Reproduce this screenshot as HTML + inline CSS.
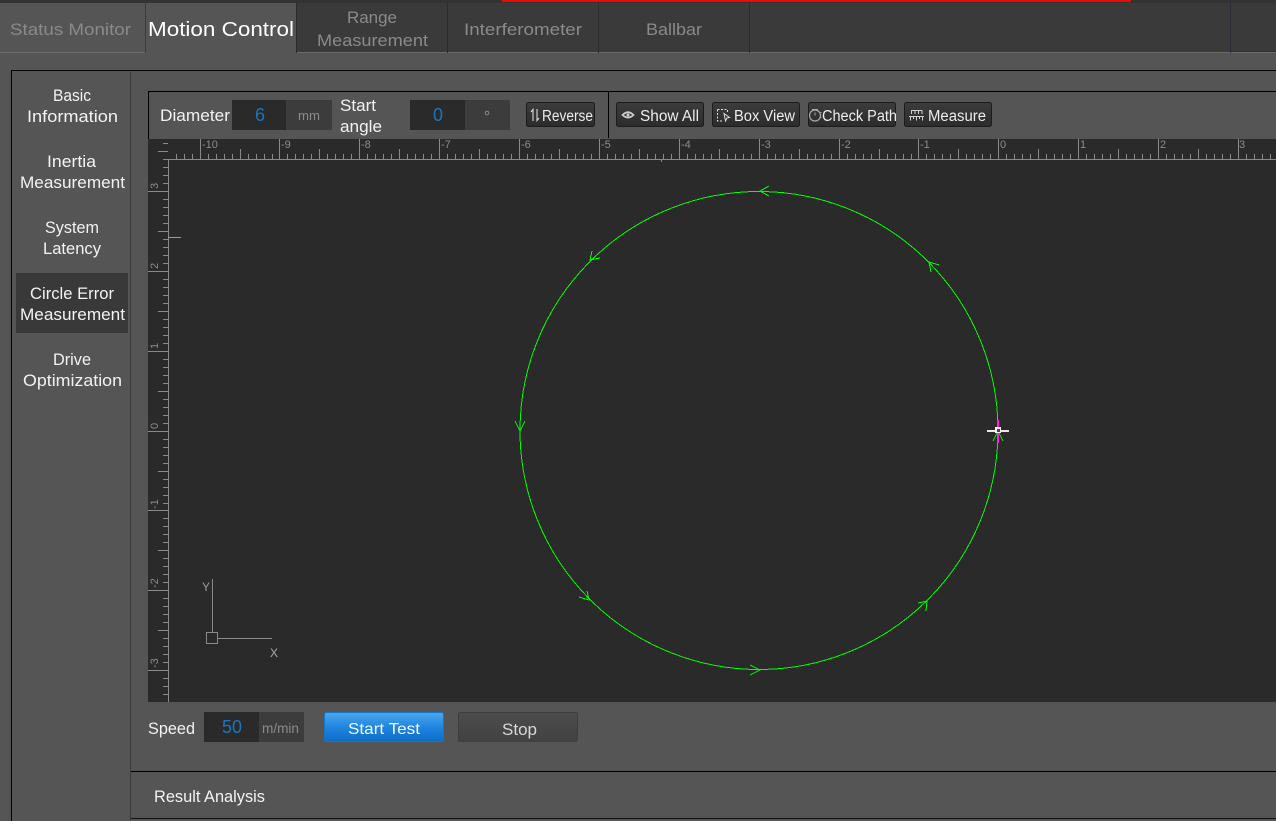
<!DOCTYPE html>
<html lang="en">
<head>
<meta charset="utf-8">
<title>Circle Error Measurement</title>
<style>
html,body{margin:0;padding:0;width:1276px;height:821px;overflow:hidden;background:#555}
svg{display:block}
text{font-family:"Liberation Sans",sans-serif;white-space:pre}
.side{font-size:17px;fill:#f2f2f2}
.tab{font-size:17px;fill:#8a8a8a}
.btn{font-size:15.500px;fill:#ececec}
.rx{font-size:11px;fill:#8c8c8c}
.val{font-size:18px;fill:#1c74bd}
.unit{font-size:13px;fill:#8a8a8a}
.lbl{font-size:17px;fill:#f2f2f2}
</style>
</head>
<body>
<svg width="1276" height="821" viewBox="0 0 1276 821" xmlns="http://www.w3.org/2000/svg">
<defs>
<linearGradient id="bg" x1="0" y1="0" x2="0" y2="1"><stop offset="0" stop-color="#3c3c3c"/><stop offset="1" stop-color="#2c2c2c"/></linearGradient>
<linearGradient id="blue" x1="0" y1="0" x2="0" y2="1"><stop offset="0" stop-color="#4ea6ec"/><stop offset=".5" stop-color="#1f86e0"/><stop offset="1" stop-color="#0d6cc8"/></linearGradient>
<linearGradient id="stop" x1="0" y1="0" x2="0" y2="1"><stop offset="0" stop-color="#4c4c4c"/><stop offset="1" stop-color="#424242"/></linearGradient>
<clipPath id="cv"><rect x="148" y="139" width="1128" height="563"/></clipPath>
<path id="hu" d="M0 0V-20M7.985 0v-5M15.970 0v-5M23.955 0v-5M31.940 0v-5M39.925 0v-10M47.910 0v-5M55.895 0v-5M63.880 0v-5M71.865 0v-5"/>
<path id="vu" d="M0 0H-20M0 7.985h-5M0 15.970h-5M0 23.955h-5M0 31.940h-5M0 39.925h-10M0 47.910h-5M0 55.895h-5M0 63.880h-5M0 71.865h-5"/>
</defs>

<!-- page -->
<rect width="1276" height="821" fill="#555"/>

<!-- top strip -->
<rect width="1276" height="3" fill="#333"/>
<rect x="502" y="0" width="629" height="2" fill="#f00808"/>

<!-- tabs -->
<rect x="0" y="3" width="1276" height="50" fill="#3a3a3a"/>
<rect x="0" y="3" width="146" height="50" fill="#555"/>
<rect x="146" y="3" width="151" height="51" fill="#555"/>
<rect x="0" y="52" width="146" height="1" fill="#6c6c6c"/>
<rect x="297" y="52" width="979" height="1" fill="#6c6c6c"/>
<rect x="145" y="3" width="1" height="50" fill="#3a3a3a"/>
<rect x="296" y="3" width="1" height="50" fill="#2c2c2c"/>
<rect x="447" y="3" width="1" height="50" fill="#2c2c2c"/>
<rect x="598" y="3" width="1" height="50" fill="#2c2c2c"/>
<rect x="749" y="3" width="1" height="50" fill="#2c2c2c"/>
<rect x="1230" y="3" width="1" height="50" fill="#2a2d3e"/>
<rect x="1231" y="51" width="45" height="1" fill="#2a2d3e"/>

<text class="tab" x="10" y="35" textLength="121" lengthAdjust="spacingAndGlyphs">Status Monitor</text>
<text x="148" y="36" font-size="20" fill="#fff" textLength="146" lengthAdjust="spacingAndGlyphs">Motion Control</text>
<text class="tab" x="347" y="23" textLength="50" lengthAdjust="spacingAndGlyphs">Range</text>
<text class="tab" x="317" y="46" textLength="111" lengthAdjust="spacingAndGlyphs">Measurement</text>
<text class="tab" x="464" y="35" textLength="118" lengthAdjust="spacingAndGlyphs">Interferometer</text>
<text class="tab" x="646" y="35" textLength="56" lengthAdjust="spacingAndGlyphs">Ballbar</text>

<!-- main panel frame -->
<rect x="11" y="70" width="1265" height="1" fill="#000"/>
<rect x="11" y="70" width="1" height="751" fill="#000"/>
<rect x="130" y="72" width="1" height="749" fill="#3a3a3a"/>

<!-- sidebar -->
<rect x="16" y="273" width="112" height="60" fill="#393939"/>
<text class="side" x="53" y="101" textLength="38" lengthAdjust="spacingAndGlyphs">Basic</text>
<text class="side" x="27" y="122" textLength="91" lengthAdjust="spacingAndGlyphs">Information</text>
<text class="side" x="47" y="167" textLength="49" lengthAdjust="spacingAndGlyphs">Inertia</text>
<text class="side" x="20" y="188" textLength="105" lengthAdjust="spacingAndGlyphs">Measurement</text>
<text class="side" x="45" y="233" textLength="54" lengthAdjust="spacingAndGlyphs">System</text>
<text class="side" x="43" y="254" textLength="58" lengthAdjust="spacingAndGlyphs">Latency</text>
<text class="side" x="30" y="299" textLength="84" lengthAdjust="spacingAndGlyphs">Circle Error</text>
<text class="side" x="20" y="320" textLength="105" lengthAdjust="spacingAndGlyphs">Measurement</text>
<text class="side" x="53" y="365" textLength="38" lengthAdjust="spacingAndGlyphs">Drive</text>
<text class="side" x="23" y="386" textLength="99" lengthAdjust="spacingAndGlyphs">Optimization</text>

<!-- toolbar frame -->
<rect x="148" y="91" width="1128" height="1" fill="#000"/>
<rect x="148" y="91" width="1" height="48" fill="#000"/>
<rect x="608" y="92" width="1" height="46" fill="#000"/>

<text class="lbl" x="160" y="121" textLength="70" lengthAdjust="spacingAndGlyphs">Diameter</text>
<rect x="232" y="100" width="100" height="30" fill="#3c3c3c"/>
<rect x="232" y="100" width="54" height="30" fill="#2a2a2a"/>
<text class="val" x="255" y="121">6</text>
<text class="unit" x="298" y="120" textLength="22" lengthAdjust="spacingAndGlyphs">mm</text>

<text class="lbl" x="340" y="111" textLength="36" lengthAdjust="spacingAndGlyphs">Start</text>
<text class="lbl" x="340" y="132" textLength="42" lengthAdjust="spacingAndGlyphs">angle</text>
<rect x="410" y="100" width="100" height="30" fill="#3c3c3c"/>
<rect x="410" y="100" width="55" height="30" fill="#2a2a2a"/>
<text class="val" x="433" y="121">0</text>
<circle cx="487" cy="113" r="1.800" fill="none" stroke="#8a8a8a"/>

<!-- toolbar buttons -->
<g fill="url(#bg)" stroke="#1c1c1c">
<rect x="526.500" y="102.500" width="68" height="24" rx="2"/>
<rect x="616.500" y="102.500" width="87" height="24" rx="2"/>
<rect x="712.500" y="102.500" width="87" height="24" rx="2"/>
<rect x="808.500" y="102.500" width="87" height="24" rx="2"/>
<rect x="904.500" y="102.500" width="87" height="24" rx="2"/>
</g>
<text class="btn" x="542" y="121" textLength="51" lengthAdjust="spacingAndGlyphs">Reverse</text>
<text class="btn" x="640" y="121" textLength="59" lengthAdjust="spacingAndGlyphs">Show All</text>
<text class="btn" x="734" y="121" textLength="61" lengthAdjust="spacingAndGlyphs">Box View</text>
<text class="btn" x="822" y="121" textLength="75" lengthAdjust="spacingAndGlyphs">Check Path</text>
<text class="btn" x="928" y="121" textLength="58" lengthAdjust="spacingAndGlyphs">Measure</text>

<!-- button icons -->
<path d="M533 121V109.500L531 112M537 109V120.500L539 118" fill="none" stroke="#ddd" stroke-width="1.100"/>
<path d="M622.500 115q5.500-5.500 11 0q-5.500 5-11 0z" fill="none" stroke="#c8c8c8" stroke-width="1.800"/>
<circle cx="628" cy="115" r="1.500" fill="#c8c8c8"/>
<path d="M717.500 109.500h10v4M717.500 109.500v11.500h6" fill="none" stroke="#ddd" stroke-dasharray="2 1.500"/>
<path d="M724 113.500l5.500 4-2.500 .5-1.500 3z" fill="none" stroke="#ddd"/>
<circle cx="815" cy="115.500" r="5.500" fill="none" stroke="#aaa" stroke-width="1.200"/>
<path d="M812 109.500h6M821 112v1M821 117v1M815 112.500v3" fill="none" stroke="#aaa"/>
<path d="M911.500 114v-3.500h3.500v3.500M915 110.500h3.500v3.500M918.500 110.500h3.500v3.500M909 116.500h15M910.500 116v4.500M913.500 116v3M916.500 116v4.500M919.500 116v3M922.500 116v4.500" fill="none" stroke="#d0d0d0"/>

<!-- canvas -->
<rect x="148" y="139" width="1128" height="563" fill="#2a2a2a"/>

<!-- ruler ticks -->
<g fill="none" stroke="#8a8a8a" stroke-width="1" shape-rendering="crispEdges" clip-path="url(#cv)">
<path d="M168 159.500H1276M168.500 160V702"/>
<path d="M176.500 159v-5M184.500 159v-5M192.500 159v-5"/>
<use href="#hu" x="200.500" y="159"/>
<use href="#hu" x="279.500" y="159"/>
<use href="#hu" x="359.500" y="159"/>
<use href="#hu" x="439.500" y="159"/>
<use href="#hu" x="519.500" y="159"/>
<use href="#hu" x="599.500" y="159"/>
<use href="#hu" x="679.500" y="159"/>
<use href="#hu" x="759.500" y="159"/>
<use href="#hu" x="839.500" y="159"/>
<use href="#hu" x="918.500" y="159"/>
<use href="#hu" x="998.500" y="159"/>
<use href="#hu" x="1078.500" y="159"/>
<use href="#hu" x="1158.500" y="159"/>
<use href="#hu" x="1238.500" y="159"/>
<path d="M168 143.500h-5M168 151.500h-10M168 159.500h-5M168 167.500h-5M168 175.500h-5M168 183.500h-5"/>
<use href="#vu" x="168" y="191.500"/>
<use href="#vu" x="168" y="271.500"/>
<use href="#vu" x="168" y="351.500"/>
<use href="#vu" x="168" y="431.500"/>
<use href="#vu" x="168" y="510.500"/>
<use href="#vu" x="168" y="590.500"/>
<use href="#vu" x="168" y="670.500"/>
<path d="M661.500 159v3"/>
</g>
<rect x="168" y="237" width="13" height="1" fill="#8c9ad8"/>

<!-- ruler labels -->
<g>
<text class="rx" x="202" y="148">-10</text>
<text class="rx" x="281" y="148">-9</text>
<text class="rx" x="361" y="148">-8</text>
<text class="rx" x="441" y="148">-7</text>
<text class="rx" x="521" y="148">-6</text>
<text class="rx" x="601" y="148">-5</text>
<text class="rx" x="681" y="148">-4</text>
<text class="rx" x="761" y="148">-3</text>
<text class="rx" x="841" y="148">-2</text>
<text class="rx" x="920" y="148">-1</text>
<text class="rx" x="1000" y="148">0</text>
<text class="rx" x="1080" y="148">1</text>
<text class="rx" x="1160" y="148">2</text>
<text class="rx" x="1239" y="148">3</text>
<text class="rx" transform="translate(158 189) rotate(-90)">3</text>
<text class="rx" transform="translate(158 269) rotate(-90)">2</text>
<text class="rx" transform="translate(158 349) rotate(-90)">1</text>
<text class="rx" transform="translate(158 429) rotate(-90)">0</text>
<text class="rx" transform="translate(158 509) rotate(-90)">-1</text>
<text class="rx" transform="translate(158 588) rotate(-90)">-2</text>
<text class="rx" transform="translate(158 668) rotate(-90)">-3</text>
</g>

<!-- axis gizmo -->
<g fill="none" stroke="#8a8a8a" shape-rendering="crispEdges">
<path d="M212.500 579V633M218 638.500H272"/>
<rect x="206.500" y="632.500" width="11" height="11"/>
</g>
<text x="202" y="591" font-size="12" fill="#9a9a9a">Y</text>
<text x="270" y="657" font-size="12" fill="#a8a8a8">X</text>

<!-- circle path -->
<g fill="none" stroke="#00ff00" stroke-width="1" shape-rendering="crispEdges">
<circle cx="759" cy="430.500" r="239"/>
<path d="M769 186L760 191L769 196"/>
<path d="M592 251L590 260L600 258"/>
<path d="M515 421L520 431L525 421"/>
<path d="M579 597L589 600L587 591"/>
<path d="M750 665L760 670L750 675"/>
<path d="M918 603L927 601L926 611"/>
<path d="M939 265L929 262L931 272"/>
<path d="M993 441L998 431L1003 441"/>
</g>

<!-- crosshair -->
<rect x="997" y="420" width="2" height="23" fill="#ff20e0"/>
<rect x="987" y="430" width="8" height="2" fill="#e8e8e8"/>
<rect x="1001" y="430" width="8" height="2" fill="#e8e8e8"/>
<rect x="995" y="427" width="6" height="6" fill="#f4f4f4"/>
<rect x="997" y="429" width="3" height="3" fill="#b0103c"/>

<!-- bottom controls -->
<text class="lbl" x="148" y="734" textLength="47" lengthAdjust="spacingAndGlyphs">Speed</text>
<rect x="204" y="712" width="100" height="30" fill="#3c3c3c"/>
<rect x="204" y="712" width="55" height="30" fill="#2a2a2a"/>
<text class="val" x="222" y="733" textLength="20" lengthAdjust="spacingAndGlyphs">50</text>
<text x="262" y="733" font-size="14" fill="#8a8a8a" textLength="37" lengthAdjust="spacingAndGlyphs">m/min</text>

<rect x="324.500" y="712.500" width="119" height="29" rx="2" fill="url(#blue)" stroke="#1676cc"/>
<text x="348" y="734" font-size="16" fill="#f4f8ff" textLength="72" lengthAdjust="spacingAndGlyphs">Start Test</text>
<rect x="458.500" y="712.500" width="119" height="29" rx="2" fill="url(#stop)" stroke="#3e3e3e"/>
<text x="502" y="735" font-size="17" fill="#d8d8d8" textLength="35" lengthAdjust="spacingAndGlyphs">Stop</text>

<!-- result analysis -->
<rect x="131" y="771" width="1145" height="1" fill="#000"/>
<text class="lbl" x="154" y="802" textLength="111" lengthAdjust="spacingAndGlyphs">Result Analysis</text>
<rect x="131" y="818" width="1145" height="1" fill="#111"/>
</svg>
</body>
</html>
